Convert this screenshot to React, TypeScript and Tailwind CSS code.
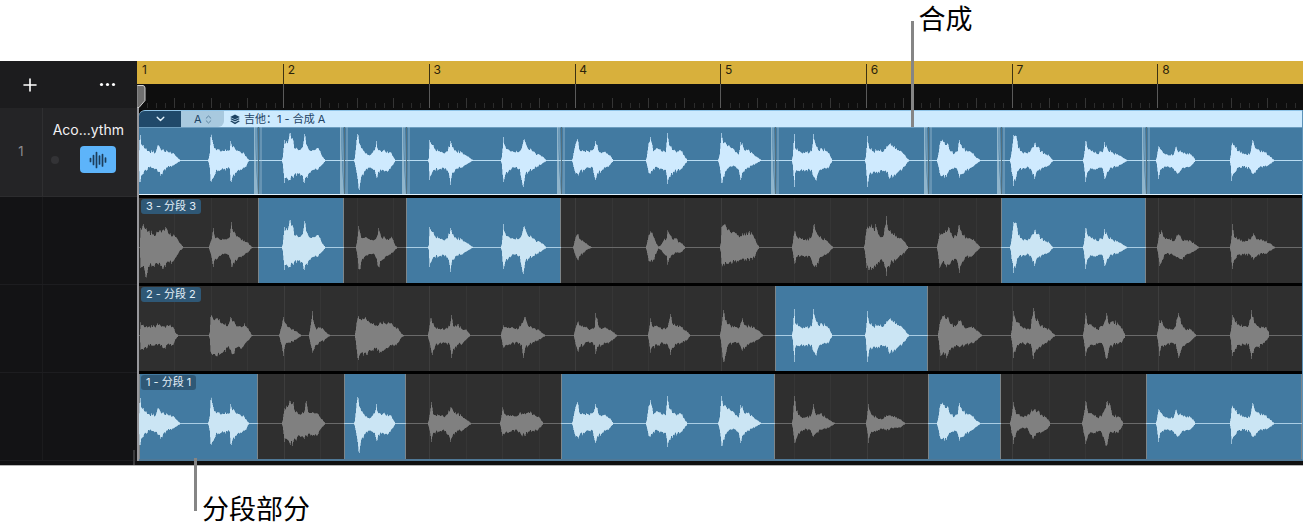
import React from "react";

type Hit = { x: number; env: number[] };
type Take = { name: string; selected: boolean[]; hits: Hit[] };

const WIDTH = 1163;
const BEAT = 36.43;
const FIRST_BEAT = -1;
const BOUNDS = [0, 119, 205, 267, 422, 636, 789, 862, 1007, WIDTH];

// Envelopes are flat triples: offset from the attack, level above, level below.
const h = (x: number, ...env: number[]): Hit => ({ x, env });

const TAKE_3: Hit[] = [
  h(1, 0, 19, 20, 3, 23, 18, 5, 18, 29, 8, 16, 19, 13, 13, 18, 17, 15, 16, 20, 17, 18, 25, 20, 19, 28, 14, 14, 32, 11, 14, 36, 10, 9, 39, 5, 4, 43, 0, 0),
  h(70, 0, 3, 3, 2, 8, 10, 4, 19, 19, 6, 9, 11, 10, 8, 8, 16, 8, 6, 20, 10, 10, 22, 25, 19, 24, 15, 15, 28, 11, 12, 33, 8, 8, 38, 5, 5, 42, 1, 1, 44, 0, 0),
  h(143, 0, 3, 3, 2, 20, 22, 5, 17, 18, 8, 27, 19, 10, 22, 16, 12, 12, 14, 16, 10, 13, 20, 13, 15, 22, 26, 22, 24, 16, 16, 27, 10, 12, 31, 10, 9, 34, 12, 9, 38, 9, 6, 40, 4, 4, 43, 0, 0),
  h(217, 0, 4, 4, 2, 21, 21, 4, 14, 21, 6, 9, 11, 11, 9, 8, 17, 7, 6, 20, 10, 11, 22, 19, 19, 25, 10, 13, 29, 9, 9, 34, 9, 7, 36, 9, 5, 39, 2, 2, 41, 0, 0),
  h(289, 0, 2, 2, 1, 20, 19, 3, 16, 14, 6, 12, 9, 10, 9, 9, 14, 8, 7, 19, 9, 10, 22, 19, 24, 24, 13, 12, 28, 9, 8, 33, 8, 7, 38, 5, 4, 41, 3, 2, 45, 0, 0),
  h(362, 0, 3, 3, 2, 23, 21, 4, 14, 14, 8, 10, 9, 13, 8, 7, 18, 9, 8, 22, 20, 26, 24, 18, 14, 27, 11, 11, 31, 9, 9, 36, 6, 6, 41, 4, 3, 45, 0, 0),
  h(434, 0, 2, 2, 2, 10, 8, 4, 13, 12, 7, 8, 8, 10, 6, 5, 14, 3, 2, 19, 0, 0),
  h(507, 0, 3, 3, 2, 12, 13, 4, 16, 14, 7, 11, 12, 10, 4, 6, 12, 1, 1, 14, 2, 2, 17, 7, 6, 20, 9, 8, 21, 17, 17, 24, 12, 10, 26, 8, 7, 30, 9, 5, 32, 5, 5, 36, 4, 4, 39, 0, 0),
  h(581, 0, 4, 4, 1, 20, 16, 3, 22, 16, 7, 17, 16, 11, 14, 16, 17, 12, 13, 21, 11, 12, 24, 14, 13, 28, 15, 11, 32, 13, 12, 35, 8, 8, 37, 3, 3, 39, 0, 0),
  h(653, 0, 4, 4, 2, 16, 16, 5, 10, 9, 10, 9, 8, 14, 7, 8, 18, 9, 10, 22, 23, 19, 25, 13, 15, 29, 9, 9, 34, 7, 7, 38, 3, 3, 41, 0, 0),
  h(725, 0, 3, 3, 2, 18, 20, 5, 21, 22, 8, 19, 20, 12, 20, 16, 16, 10, 12, 19, 12, 14, 22, 31, 28, 24, 17, 18, 28, 14, 14, 33, 9, 11, 37, 9, 8, 41, 5, 4, 44, 0, 0),
  h(798, 0, 4, 4, 2, 14, 20, 5, 13, 15, 8, 17, 17, 12, 19, 17, 15, 11, 12, 19, 11, 12, 22, 22, 25, 25, 12, 14, 29, 10, 9, 34, 8, 9, 38, 6, 5, 43, 0, 0),
  h(871, 0, 3, 3, 3, 25, 25, 6, 24, 16, 8, 12, 10, 12, 8, 8, 17, 7, 6, 21, 12, 10, 24, 17, 18, 27, 13, 10, 31, 9, 8, 35, 6, 6, 38, 6, 5, 41, 2, 2, 43, 0, 0),
  h(944, 0, 3, 3, 2, 19, 21, 4, 13, 12, 8, 9, 8, 13, 7, 8, 19, 8, 8, 21, 18, 18, 24, 12, 11, 28, 8, 7, 33, 6, 6, 38, 4, 4, 41, 2, 2, 44, 0, 0),
  h(1018, 0, 4, 4, 2, 15, 18, 4, 17, 15, 7, 10, 7, 11, 8, 6, 17, 7, 8, 21, 13, 10, 25, 7, 12, 29, 7, 7, 34, 6, 5, 38, 3, 3, 42, 0, 0),
  h(1091, 0, 4, 4, 2, 23, 21, 4, 10, 12, 8, 8, 7, 13, 6, 7, 19, 8, 7, 23, 14, 12, 26, 8, 9, 30, 8, 6, 35, 6, 6, 40, 4, 3, 45, 0, 0),
];

const TAKE_2: Hit[] = [
  h(1, 0, 13, 14, 4, 8, 12, 9, 9, 10, 14, 9, 10, 19, 11, 8, 24, 9, 12, 29, 10, 9, 33, 8, 9, 35, 3, 4, 38, 0, 0),
  h(70, 0, 3, 3, 1, 18, 16, 5, 15, 18, 9, 15, 17, 13, 12, 17, 18, 9, 12, 21, 18, 14, 24, 14, 18, 27, 9, 12, 31, 9, 13, 35, 12, 9, 39, 7, 5, 42, 1, 1, 44, 0, 0),
  h(140, 0, 2, 2, 2, 9, 9, 4, 18, 20, 6, 12, 9, 9, 8, 7, 13, 6, 6, 17, 4, 4, 21, 1, 1, 22, 0, 0),
  h(170, 0, 4, 4, 3, 24, 17, 4, 15, 15, 7, 6, 9, 11, 8, 6, 15, 5, 5, 18, 2, 2, 21, 0, 0),
  h(216, 0, 5, 5, 2, 17, 22, 6, 15, 17, 11, 16, 19, 16, 12, 15, 21, 10, 12, 25, 13, 16, 29, 12, 14, 33, 13, 12, 38, 9, 10, 43, 7, 7, 46, 2, 2, 49, 0, 0),
  h(289, 0, 4, 4, 2, 17, 12, 4, 12, 19, 7, 8, 10, 12, 6, 7, 17, 7, 7, 21, 9, 9, 23, 20, 22, 25, 9, 13, 29, 11, 9, 34, 6, 8, 38, 6, 4, 42, 0, 0),
  h(362, 0, 4, 4, 2, 10, 12, 5, 8, 9, 10, 8, 8, 16, 6, 7, 20, 12, 9, 22, 15, 22, 24, 18, 12, 27, 9, 10, 31, 7, 7, 36, 6, 5, 40, 3, 3, 44, 0, 0),
  h(435, 0, 4, 4, 3, 13, 15, 6, 10, 11, 11, 8, 7, 16, 6, 7, 20, 8, 9, 21, 22, 18, 24, 10, 11, 28, 7, 9, 33, 7, 7, 38, 4, 5, 43, 0, 0),
  h(509, 0, 4, 4, 2, 17, 17, 4, 9, 11, 9, 9, 10, 14, 6, 7, 19, 8, 9, 22, 21, 19, 24, 12, 12, 28, 9, 9, 33, 8, 7, 38, 5, 5, 42, 0, 0),
  h(581, 0, 4, 4, 3, 25, 26, 5, 15, 20, 8, 11, 9, 13, 8, 7, 18, 7, 7, 22, 17, 15, 25, 10, 11, 29, 9, 8, 34, 8, 7, 38, 5, 4, 43, 0, 0),
  h(653, 0, 4, 4, 2, 26, 26, 3, 12, 12, 6, 9, 10, 11, 8, 9, 17, 8, 9, 19, 9, 9, 21, 26, 16, 23, 17, 19, 26, 10, 12, 30, 11, 8, 34, 9, 8, 37, 7, 6, 39, 2, 2, 40, 0, 0),
  h(726, 0, 3, 3, 2, 24, 26, 4, 12, 14, 8, 9, 11, 13, 10, 11, 18, 9, 10, 21, 14, 12, 25, 17, 17, 28, 13, 16, 32, 10, 12, 36, 9, 10, 39, 6, 6, 42, 2, 2, 44, 0, 0),
  h(799, 0, 5, 5, 2, 15, 20, 6, 20, 19, 9, 18, 20, 13, 11, 12, 17, 9, 11, 22, 15, 11, 26, 8, 10, 31, 8, 8, 36, 7, 7, 40, 4, 3, 44, 0, 0),
  h(872, 0, 5, 5, 2, 24, 22, 5, 13, 12, 10, 9, 8, 15, 6, 8, 19, 7, 8, 22, 27, 23, 24, 17, 16, 28, 11, 11, 33, 8, 8, 38, 6, 5, 44, 0, 0),
  h(944, 0, 4, 4, 2, 22, 20, 4, 12, 13, 9, 9, 9, 14, 6, 8, 19, 9, 9, 23, 22, 23, 26, 11, 12, 30, 14, 9, 35, 11, 8, 39, 7, 6, 42, 0, 0),
  h(1018, 0, 4, 4, 2, 15, 20, 4, 15, 10, 8, 7, 10, 14, 6, 7, 18, 9, 8, 21, 22, 22, 24, 11, 14, 28, 6, 9, 33, 6, 6, 36, 4, 3, 39, 0, 0),
  h(1091, 0, 4, 4, 2, 20, 20, 5, 13, 13, 9, 10, 9, 14, 9, 9, 18, 10, 8, 21, 25, 23, 24, 12, 13, 28, 9, 11, 32, 8, 9, 36, 8, 5, 38, 4, 2, 39, 0, 0),
];

const TAKE_1: Hit[] = [
  h(0, 0, 20, 21, 1, 25, 21, 2, 16, 15, 5, 12, 10, 10, 9, 7, 16, 8, 8, 19, 15, 11, 21, 12, 15, 24, 11, 10, 28, 9, 7, 33, 7, 5, 37, 4, 3, 41, 0, 0),
  h(69, 0, 2, 2, 1, 7, 7, 2, 23, 20, 4, 20, 18, 6, 12, 15, 8, 10, 9, 13, 9, 9, 19, 10, 8, 21, 10, 8, 22, 19, 20, 24, 13, 17, 27, 11, 12, 31, 9, 10, 35, 8, 7, 38, 4, 6, 40, 1, 1, 41, 0, 0),
  h(143, 0, 3, 3, 2, 15, 18, 6, 18, 17, 8, 22, 21, 11, 21, 18, 13, 11, 16, 17, 9, 12, 21, 10, 14, 24, 22, 12, 26, 11, 10, 30, 11, 12, 34, 10, 12, 38, 6, 6, 43, 0, 0),
  h(215, 0, 2, 2, 2, 20, 12, 3, 26, 18, 5, 17, 29, 7, 12, 16, 11, 7, 10, 15, 5, 7, 20, 10, 9, 22, 19, 17, 24, 10, 11, 28, 9, 9, 33, 9, 11, 36, 8, 8, 38, 5, 5, 41, 0, 0),
  h(289, 0, 3, 3, 3, 21, 18, 5, 9, 9, 10, 8, 8, 15, 7, 6, 19, 9, 11, 22, 16, 18, 25, 12, 10, 29, 10, 7, 34, 7, 7, 38, 4, 4, 43, 0, 0),
  h(361, 0, 3, 3, 2, 16, 12, 5, 9, 9, 10, 8, 8, 16, 7, 6, 20, 11, 10, 24, 10, 12, 28, 11, 8, 36, 7, 7, 40, 5, 4, 43, 0, 0),
  h(433, 0, 2, 2, 2, 12, 10, 5, 21, 13, 7, 11, 12, 11, 9, 9, 16, 9, 7, 20, 10, 7, 23, 19, 19, 26, 10, 13, 30, 8, 9, 35, 7, 6, 38, 5, 4, 41, 0, 0),
  h(507, 0, 3, 3, 2, 17, 12, 4, 23, 13, 7, 9, 8, 11, 12, 7, 15, 9, 8, 19, 8, 9, 21, 27, 23, 23, 15, 16, 27, 10, 11, 31, 9, 10, 35, 9, 8, 38, 5, 5, 41, 0, 0),
  h(579, 0, 2, 2, 1, 6, 6, 3, 27, 22, 5, 17, 16, 9, 14, 8, 13, 12, 6, 17, 8, 6, 20, 6, 9, 22, 18, 19, 25, 13, 11, 29, 10, 7, 34, 7, 5, 38, 4, 3, 43, 0, 0),
  h(653, 0, 4, 4, 2, 27, 19, 4, 12, 15, 8, 7, 8, 13, 6, 5, 18, 7, 7, 21, 19, 13, 24, 8, 9, 28, 10, 6, 33, 6, 5, 38, 3, 3, 43, 0, 0),
  h(727, 0, 4, 4, 2, 19, 19, 5, 9, 8, 10, 6, 7, 15, 4, 5, 20, 8, 7, 24, 8, 5, 29, 6, 4, 34, 4, 4, 38, 1, 1, 39, 0, 0),
  h(798, 0, 3, 3, 3, 19, 15, 7, 18, 17, 10, 17, 13, 13, 9, 9, 17, 7, 7, 20, 9, 10, 22, 20, 17, 25, 12, 13, 29, 10, 10, 34, 8, 7, 38, 4, 4, 43, 0, 0),
  h(871, 0, 3, 3, 3, 21, 20, 6, 9, 9, 11, 7, 5, 16, 7, 4, 20, 11, 11, 23, 13, 15, 27, 12, 9, 32, 8, 8, 36, 6, 6, 38, 4, 4, 40, 0, 0),
  h(943, 0, 3, 3, 3, 22, 20, 6, 10, 11, 10, 9, 9, 15, 6, 8, 19, 7, 9, 24, 21, 22, 27, 20, 10, 30, 8, 9, 35, 7, 9, 38, 6, 6, 40, 2, 2, 41, 0, 0),
  h(1017, 0, 3, 3, 2, 14, 18, 4, 11, 9, 8, 7, 6, 13, 5, 7, 17, 6, 8, 19, 13, 10, 21, 10, 13, 25, 8, 9, 29, 7, 7, 34, 6, 6, 37, 4, 3, 39, 0, 0),
  h(1091, 0, 5, 5, 1, 15, 20, 3, 15, 13, 8, 9, 7, 13, 7, 6, 19, 6, 8, 22, 20, 13, 25, 12, 12, 29, 10, 7, 34, 8, 6, 39, 5, 4, 44, 0, 0),
];

const TAKES: Take[] = [
  { name: "3 - 分段 3", selected: [false, true, false, true, false, false, false, true, false], hits: TAKE_3 },
  { name: "2 - 分段 2", selected: [false, false, false, false, false, true, false, false, false], hits: TAKE_2 },
  { name: "1 - 分段 1", selected: [true, false, true, false, true, false, true, false, true], hits: TAKE_1 },
];

const segmentOf = (x: number) => BOUNDS.findIndex((b, i) => x + 4 >= b && x + 4 < BOUNDS[i + 1]);
const isSelected = (take: Take, hit: Hit) => take.selected[segmentOf(hit.x)];

function grain(n: number) {
  const v = Math.sin(n * 12.9898) * 43758.5453;
  return 0.84 + 0.36 * (v - Math.floor(v));
}

function levels(hit: Hit, channel: 1 | 2) {
  const { env, x } = hit;
  const out: number[] = [];
  for (let k = 0; k + 3 < env.length; k += 3) {
    const from = env[k];
    const to = env[k + 3];
    for (let dx = from; dx < to; dx++) {
      const t = (dx - from) / (to - from);
      const level = env[k + channel] * (1 - t) + env[k + 3 + channel] * t;
      out.push(level * (dx === from ? 1.02 : grain(x + dx + channel * 517)));
    }
  }
  return out;
}

const core = (a: number[]) =>
  a.map((v, i) => (v + Math.min(v, a[i - 1] ?? 0, a[i + 1] ?? v)) / 2);

function outline(x: number, up: number[], down: number[], mid: number) {
  const top = up.map((v, i) => `V${(mid - v).toFixed(1)}H${x + i + 1}`).join("");
  const bottom = down.map((_, i) => {
    const j = down.length - 1 - i;
    return `V${(mid + down[j]).toFixed(1)}H${x + j}`;
  }).join("");
  return `M${x} ${mid}${top}${bottom}Z`;
}

function Wave({ hit, mid, color }: { hit: Hit; mid: number; color: string }) {
  const up = levels(hit, 1);
  const down = levels(hit, 2);
  return (
    <g fill={color}>
      <path d={outline(hit.x, up, down, mid)} opacity={0.65} />
      <path d={outline(hit.x, core(up), core(down), mid)} />
    </g>
  );
}

function Canvas({ height, children }: { height: number; children: React.ReactNode }) {
  return (
    <svg
      className="pointer-events-none absolute inset-0 h-full w-full"
      viewBox={`0 0 ${WIDTH} ${height}`}
      preserveAspectRatio="none"
      aria-hidden="true"
    >
      {children}
    </svg>
  );
}

function Ruler() {
  const bars = [1, 2, 3, 4, 5, 6, 7, 8];
  const ticks = Array.from({ length: 128 }, (_, i) => i).filter((i) => i > 0 && i % 16 !== 0);
  return (
    <div className="relative">
      <div className="h-[23px] bg-[#d8b03c]" />
      <div className="h-[26px] bg-[#0e0e0e]" />
      <svg className="absolute inset-0 h-full w-full" viewBox="0 0 1166 49" preserveAspectRatio="none" aria-hidden="true">
        {ticks.map((i) => {
          const x = Math.round(1 + (i * BEAT) / 4);
          const y = i % 4 === 0 ? 37 : 42;
          return <rect key={i} x={x} y={y} width={1} height={47 - y} fill={i % 4 === 0 ? "#353535" : "#2b2b2b"} />;
        })}
        {bars.slice(1).map((b) => {
          const x = Math.round(0.4 + (b - 1) * BEAT * 4);
          return (
            <g key={b}>
              <rect x={x} y={3} width={1} height={20} fill="#3d3212" />
              <rect x={x} y={23} width={1} height={24} fill="#5a5a5a" />
            </g>
          );
        })}
      </svg>
      <ol className="absolute inset-x-0 top-0 flex text-[12px] leading-[18px] text-[#2a220b]">
        {bars.map((b) => (
          <li key={b} className="shrink-0 basis-[12.5%] pl-[5px]">
            {b}
          </li>
        ))}
      </ol>
    </div>
  );
}

function CompRegion() {
  const mid = 33.5;
  return (
    <section className="overflow-hidden rounded-tl-md border-t border-[#8fc4e8] bg-[#427aa1]" aria-label="合成">
      <header className="flex h-4 items-stretch bg-[#cdeafe] text-[11px] leading-4 text-[#1d4363]">
        <button type="button" aria-label="收起" className="flex w-[42px] items-center justify-center bg-[#20496a]">
          <svg width="9" height="6" viewBox="0 0 9 6" fill="none" stroke="#e4f3fd" strokeWidth="1.4" strokeLinecap="round" strokeLinejoin="round">
            <path d="M1.2 1.2 4.5 4.4 7.8 1.2" />
          </svg>
        </button>
        <div className="relative flex w-[43px] items-center rounded-br-md bg-[#a8c9df]">
          <select aria-label="合成" className="h-4 w-full appearance-none bg-transparent pl-[13px] text-[11px] leading-4 text-[#1d4363] outline-none">
            <option>A</option>
          </select>
          <svg className="pointer-events-none absolute left-6 top-1" width="7" height="9" viewBox="0 0 7 9" fill="none" stroke="#5d84a0" strokeWidth="1" strokeLinecap="round" strokeLinejoin="round">
            <path d="M1.2 3.2 3.5 1 5.8 3.2M1.2 5.8 3.5 8 5.8 5.8" />
          </svg>
        </div>
        <span className="flex items-center gap-1 pl-[6px]">
          <svg width="10" height="11" viewBox="0 0 10 11" fill="#1d4363">
            <path d="M5 .6 9.8 3 5 5.5.2 3Z" />
            <path d="M.2 4.9 1.5 4.2 5 6.1 8.5 4.2 9.8 4.9 5 7.4Z" />
            <path d="M.2 7.2 1.5 6.5 5 8.4 8.5 6.5 9.8 7.2 5 10.2Z" />
          </svg>
          <span>吉他：1 - 合成 A</span>
        </span>
      </header>
      <div className="relative h-[68px] border-b border-[#dff2ff]">
        <Canvas height={67}>
          <rect x={0} y={0} width={WIDTH} height={1} fill="#6c9dbf" />
          <rect x={0} y={33} width={WIDTH} height={1} fill="#b9dcf2" />
          {TAKES.flatMap((take) =>
            take.hits
              .filter((hit) => isSelected(take, hit))
              .map((hit) => <Wave key={hit.x} hit={hit} mid={mid} color="#cfeafe" />),
          )}
          {BOUNDS.slice(1, -1).map((x) => (
            <g key={x}>
              <path d={`M${x - 4} 0H${x - 3}Q${x - 2} 45 ${x} 67H${x - 4}Z`} fill="#c4dcea" opacity={0.6} />
              <path d={`M${x - 3} 0H${x - 1}L${x + 1} 67H${x}Z`} fill="#c4dcea" opacity={0.35} />
              <path d={`M${x + 4} 0H${x + 2}Q${x + 2} 45 ${x + 1} 67H${x + 4}Z`} fill="#a9c6d8" opacity={0.35} />
              <rect x={x} y={0} width={1} height={67} fill="#53707f" />
            </g>
          ))}
        </Canvas>
      </div>
    </section>
  );
}

function Lane({ take }: { take: Take }) {
  const mid = 49.5;
  return (
    <section className="relative h-[85px] bg-[#2f2f2f]" aria-label={take.name}>
      <Canvas height={85}>
        {Array.from({ length: 31 }, (_, i) => (
          <rect key={i} x={Math.round(FIRST_BEAT + (i + 1) * BEAT)} y={0} width={1} height={85} fill={i % 4 === 3 ? "#3d3d3d" : "#363636"} />
        ))}
      </Canvas>
      <div className="relative flex h-full">
        {take.selected.map((on, i) => (
          <div
            key={i}
            className={on ? "border-x border-[#7d8589] bg-[#427aa1]" : ""}
            style={{ width: `${((BOUNDS[i + 1] - BOUNDS[i]) / WIDTH) * 100}%` }}
          />
        ))}
      </div>
      <Canvas height={85}>
        {take.selected.map((on, i) => (
          <rect key={i} x={BOUNDS[i]} y={49} width={BOUNDS[i + 1] - BOUNDS[i]} height={1} fill={on ? "#a9cde4" : "#6a6a6a"} />
        ))}
        {take.hits.map((hit) => (
          <Wave key={hit.x} hit={hit} mid={mid} color={isSelected(take, hit) ? "#cbe5f4" : "#808080"} />
        ))}
      </Canvas>
      <span className="absolute left-[2px] top-px rounded-[3px] bg-[#2f5876] px-[5px] text-[11px] leading-[15px] text-[#e3eff7]">
        {take.name}
      </span>
    </section>
  );
}

function Sidebar() {
  return (
    <aside className="flex w-[137px] shrink-0 flex-col bg-[#131315]">
      <div className="flex h-[47px] items-center justify-between bg-[#1c1c1e] pl-[23px] pr-[21px] text-white">
        <button type="button" aria-label="添加轨道">
          <svg width="14" height="14" viewBox="0 0 14 14" stroke="currentColor" strokeWidth="1.6" strokeLinecap="round">
            <path d="M7 1V13M1 7H13" />
          </svg>
        </button>
        <button type="button" aria-label="更多">
          <svg width="17" height="5" viewBox="0 0 17 5" fill="currentColor">
            <circle cx="2.5" cy="2.5" r="1.6" />
            <circle cx="8.5" cy="2.5" r="1.6" />
            <circle cx="14.5" cy="2.5" r="1.6" />
          </svg>
        </button>
      </div>
      <div className="flex h-[89px] border-b border-[#2c2c2e] bg-[#242426]">
        <div className="flex w-[43px] items-center justify-center border-r border-[#2f2f31] text-[13px] text-[#8d8d92]">1</div>
        <div className="flex flex-1 flex-col items-end pt-[13px]">
          <h2 className="pr-[13px] text-[14px] leading-[18px] text-[#f2f2f4]">Aco...ythm</h2>
          <div className="flex w-full items-center justify-between pl-[8px] pr-[21px] pt-[7px]">
            <span className="h-2 w-2 rounded-full bg-[#333336]" />
            <button type="button" aria-label="音频轨道" className="flex h-[27px] w-9 items-center justify-center rounded-[4px] bg-[#5db4fa]">
              <svg width="18" height="18" viewBox="0 0 18 18" stroke="#1c3d5a" strokeWidth="1.7" strokeLinecap="round">
                <path d="M1.5 7.5V10.5M4.5 4.5V13.5M7.5 1.5V16.5M10.5 5V13M13.5 3.5V15M16.5 7V11" />
              </svg>
            </button>
          </div>
        </div>
      </div>
      {TAKES.map((take) => (
        <div key={take.name} className="flex h-[88px] border-b border-[#1d1d20]">
          <div className="w-[43px] border-r border-[#1b1b1d]" />
        </div>
      ))}
      <div className="flex flex-1 bg-[#101012]" />
    </aside>
  );
}

export default function App() {
  return (
    <main className="min-h-screen w-full overflow-x-hidden bg-white font-[Inter,'Noto_Sans_CJK_SC',sans-serif]">
      <figure>
        <div className="relative h-[61px]">
          <p className="pl-[70.5%] pt-[4px] text-[27px] leading-[32px] text-black">合成</p>
          <span className="absolute left-[69.9%] top-[21px] z-20 h-[106px] w-[3px] bg-[#858585]" />
        </div>
        <div className="relative flex border-b border-[#b5b5b5] bg-[#0c0c0c]">
          <Sidebar />
          <div className="relative min-w-0 flex-1">
            <Ruler />
            <div className="ml-[2px] flex flex-col gap-[3px] border-b-2 border-r border-b-[#4f7896] border-r-[#5d93b9] bg-black">
              <CompRegion />
              {TAKES.map((take) => (
                <Lane key={take.name} take={take} />
              ))}
            </div>
            <div className="h-1 bg-[#101010]" />
            <div className="absolute bottom-1 left-0 top-6 w-[2px] bg-[#98989c]" />
            <svg className="absolute left-0 top-6" width="9" height="24" viewBox="0 0 9 24" fill="#6f6f6f" stroke="#d2d2d2" strokeWidth="1">
              <path d="M.5.5H6Q8 .8 8 3V15.5L2 22.5H.5" />
            </svg>
          </div>
          <span className="absolute bottom-0 left-[133px] h-[15px] w-[2px] bg-[#3b3b3d]" />
        </div>
        <div className="relative">
          <span className="absolute -top-2 left-[15%] h-[53px] w-[3px] -translate-x-px bg-[#858585]" />
          <p className="pl-[15.5%] pt-[28px] text-[27px] leading-[32px] text-black">分段部分</p>
        </div>
      </figure>
    </main>
  );
}
